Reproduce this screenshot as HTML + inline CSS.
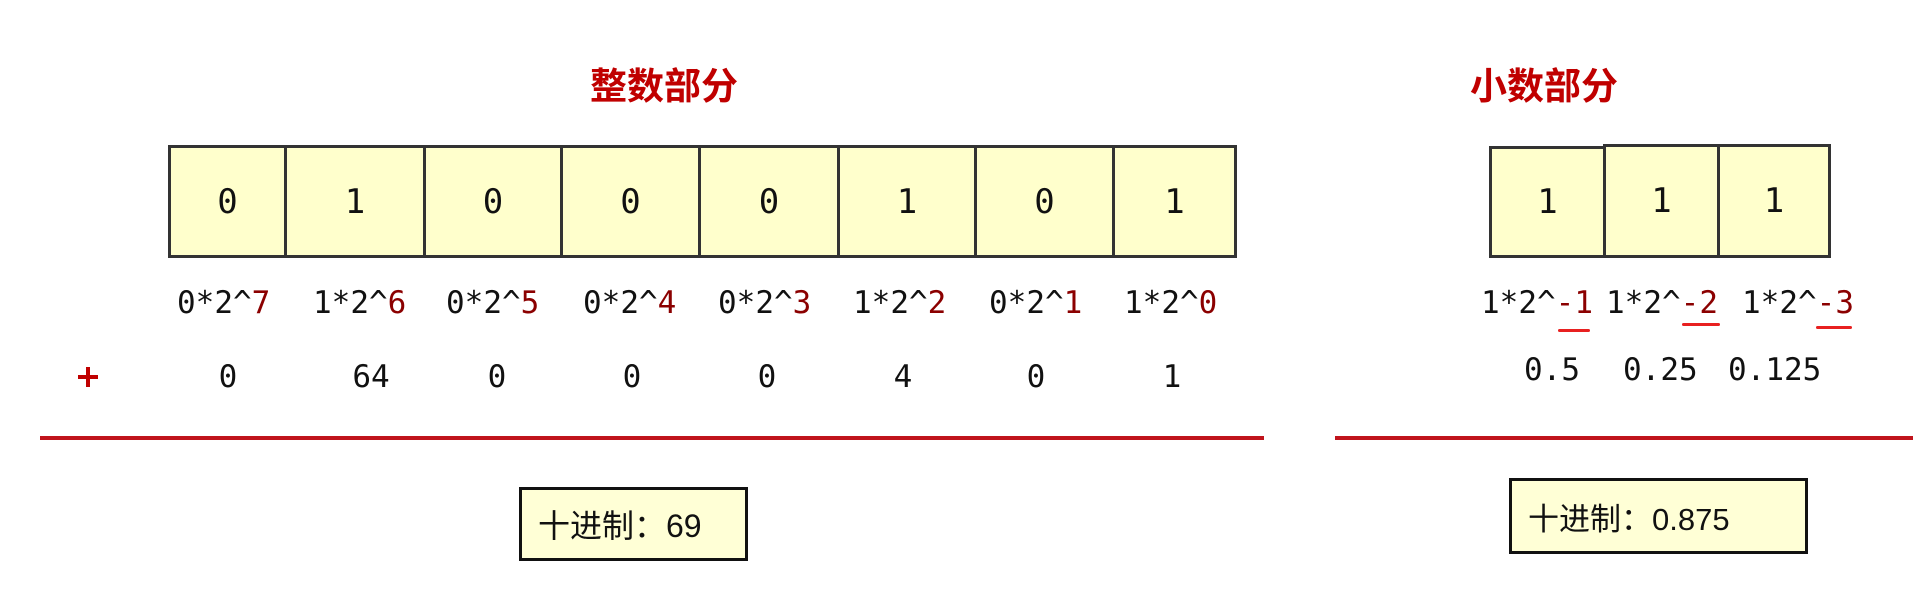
<!DOCTYPE html>
<html><head><meta charset="utf-8"><style>
body{margin:0;width:1921px;height:601px;background:#fff;position:relative;overflow:hidden;font-family:"DejaVu Sans Mono","Liberation Mono",monospace;color:#111}
.a{position:absolute;white-space:nowrap}
.t{font-family:"Liberation Sans","Noto Sans CJK SC",sans-serif;font-weight:bold;color:#c00000;font-size:37px;line-height:37px}
.cell{position:absolute;top:145px;height:113px;background:#ffffcc;border:3px solid #333;box-sizing:border-box;font-size:34px;display:flex;align-items:center;justify-content:center}
.f{font-size:31px;line-height:32px}
.r{color:#8b0000}
.v{font-size:31px;line-height:32px;transform:translateX(-50%)}
.line{position:absolute;height:4px;background:#c0141c}
.res{position:absolute;background:#ffffd6;border:3px solid #111;box-sizing:border-box;font-family:"Liberation Sans","Noto Sans CJK SC",sans-serif;font-size:32px;display:flex;align-items:center;padding-left:16px}
.u{position:absolute;height:3px;background:#e82020;border-radius:2px}
</style></head><body>
<div class="a t" style="left:590px;top:68px">整数部分</div>
<div class="a t" style="left:1470px;top:68px">小数部分</div>

<div class="cell" style="left:168px;width:119px">0</div>
<div class="cell" style="left:284px;width:142px">1</div>
<div class="cell" style="left:423px;width:140px">0</div>
<div class="cell" style="left:560px;width:141px">0</div>
<div class="cell" style="left:698px;width:142px">0</div>
<div class="cell" style="left:837px;width:140px">1</div>
<div class="cell" style="left:974px;width:141px">0</div>
<div class="cell" style="left:1112px;width:125px">1</div>

<div class="cell" style="left:1489px;width:117px;top:146px;height:112px">1</div>
<div class="cell" style="left:1603px;width:117px;top:144px;height:114px">1</div>
<div class="cell" style="left:1717px;width:114px;top:144px;height:114px">1</div>

<div class="a f" style="left:177px;top:287px">0*2^<span class="r">7</span></div>
<div class="a f" style="left:313px;top:287px">1*2^<span class="r">6</span></div>
<div class="a f" style="left:446px;top:287px">0*2^<span class="r">5</span></div>
<div class="a f" style="left:583px;top:287px">0*2^<span class="r">4</span></div>
<div class="a f" style="left:718px;top:287px">0*2^<span class="r">3</span></div>
<div class="a f" style="left:853px;top:287px">1*2^<span class="r">2</span></div>
<div class="a f" style="left:989px;top:287px">0*2^<span class="r">1</span></div>
<div class="a f" style="left:1124px;top:287px">1*2^<span class="r">0</span></div>

<div class="a f" style="left:1481px;top:287px">1*2^<span class="r">-1</span></div>
<div class="a f" style="left:1606px;top:287px">1*2^<span class="r">-2</span></div>
<div class="a f" style="left:1742px;top:287px">1*2^<span class="r">-3</span></div>
<div class="u" style="left:1558px;top:329px;width:32px"></div>
<div class="u" style="left:1682px;top:323px;width:38px"></div>
<div class="u" style="left:1816px;top:326px;width:36px"></div>

<div class="a v" style="left:228px;top:361px">0</div>
<div class="a v" style="left:371px;top:361px">64</div>
<div class="a v" style="left:497px;top:361px">0</div>
<div class="a v" style="left:632px;top:361px">0</div>
<div class="a v" style="left:767px;top:361px">0</div>
<div class="a v" style="left:903px;top:361px">4</div>
<div class="a v" style="left:1036px;top:361px">0</div>
<div class="a v" style="left:1172px;top:361px">1</div>

<div class="a f" style="left:1524px;top:354px">0.5</div>
<div class="a f" style="left:1623px;top:354px">0.25</div>
<div class="a f" style="left:1728px;top:354px">0.125</div>

<div class="a" style="left:78px;top:375px;width:20px;height:4px;background:#c00000"></div>
<div class="a" style="left:86px;top:367px;width:4px;height:20px;background:#c00000"></div>

<div class="line" style="left:40px;top:436px;width:1224px"></div>
<div class="line" style="left:1335px;top:436px;width:578px"></div>

<div class="res" style="left:519px;top:487px;width:229px;height:74px">十进制：69</div>
<div class="res" style="left:1509px;top:478px;width:299px;height:76px;font-size:31px">十进制：0.875</div>
</body></html>
